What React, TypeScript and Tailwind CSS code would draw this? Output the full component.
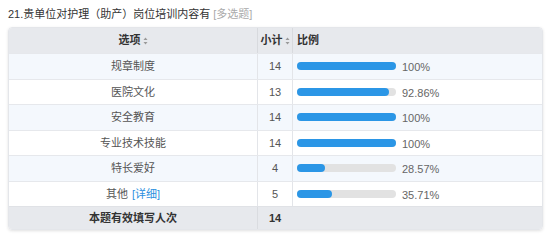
const rows = [
  { label: "规章制度", count: 14, pct: 100 },
  { label: "医院文化", count: 13, pct: 92.86 },
  { label: "安全教育", count: 14, pct: 100 },
  { label: "专业技术技能", count: 14, pct: 100 },
  { label: "特长爱好", count: 4, pct: 28.57 },
  { label: "其他", count: 5, pct: 35.71, detail: true },
];

function SortIcon() {
  return (
    <svg width="5" height="8" viewBox="0 0 5 8" className="ml-[2px] inline-block">
      <path d="M2.5 0.5 L4.5 3 H0.5 Z" fill="#999" />
      <path d="M2.5 7.5 L4.5 5 H0.5 Z" fill="#999" />
    </svg>
  );
}

function Bar({ pct }: { pct: number }) {
  return (
    <div className="flex items-center">
      <div className="h-[8px] w-[99px] rounded-full bg-[#e2e2e2]">
        <div className="h-full rounded-full bg-[#2b96e6]" style={{ width: `${pct}%` }} />
      </div>
      <span className="mt-[2px] ml-[6px] text-[11px] text-[#666]">{pct === 100 ? "100" : pct.toFixed(2)}%</span>
    </div>
  );
}

export default function App() {
  return (
    <div className="h-[241px] w-[554px] bg-white pt-[8px] pl-[8px] pr-[11px] font-['Liberation_Sans','Noto_Sans_CJK_SC',sans-serif] text-[11px]">
      <div className="flex h-[13px] items-center text-[#333]">
        <span>21.贵单位对护理（助产）岗位培训内容有</span>
        <span className="ml-[3px] text-[#aaa]">[多选题]</span>
      </div>
      <div className="mt-[6px] overflow-hidden rounded-[4px] border border-[#e4e6ea] shadow-[0_1px_3px_rgba(0,0,0,0.12)]">
        <div className="grid h-[25px] grid-cols-[248px_35px_1fr] bg-[#e7e9ed] font-bold text-[#333]">
          <div className="flex items-center justify-center">选项<SortIcon /></div>
          <div className="flex items-center justify-center border-l border-[#d8dade]">小计<SortIcon /></div>
          <div className="flex items-center border-l border-[#d8dade] pl-[4px]">比例</div>
        </div>
        {rows.map((r, i) => (
          <div
            key={r.label}
            className={`grid h-[25.5px] grid-cols-[248px_35px_1fr] border-t border-[#e6e8ec] text-[#555] ${i % 2 === 0 ? "bg-[#f4f8fd]" : "bg-white"}`}
          >
            <div className="flex items-center justify-center">
              {r.label}
              {r.detail && <span className="ml-[4px] text-[#2b8fe0]">[详细]</span>}
            </div>
            <div className="flex items-center justify-center border-l border-[#e3e5e9]">{r.count}</div>
            <div className="flex items-center border-l border-[#e3e5e9] pl-[4px]">
              <Bar pct={r.pct} />
            </div>
          </div>
        ))}
        <div className="grid h-[23px] grid-cols-[248px_35px_1fr] border-t border-[#e0e2e6] bg-[#e7e9ed] font-bold text-[#333]">
          <div className="flex items-center justify-center">本题有效填写人次</div>
          <div className="flex items-center justify-center border-l border-[#dadce0]">14</div>
          <div className="border-l border-[#e7e9ed]" />
        </div>
      </div>
    </div>
  );
}
